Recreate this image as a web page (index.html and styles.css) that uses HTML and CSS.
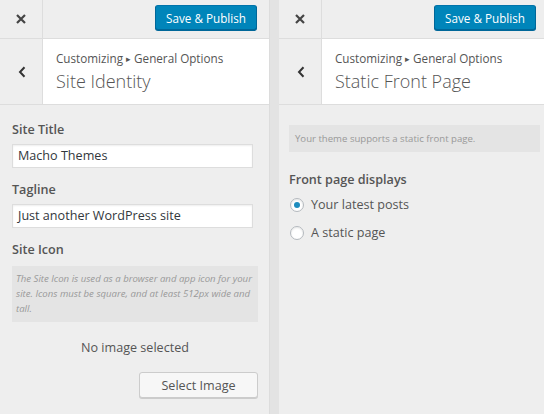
FILE: index.html
```html
<!DOCTYPE html>
<html>
<head>
<meta charset="utf-8">
<link rel="stylesheet" href="styles.css">
</head>
<body>
<div class="wrap">
  <div class="panel left">
    <div class="header">
      <div class="close"><svg width="10" height="10" viewBox="0 0 10 10"><path d="M1 1L9 9M9 1L1 9" stroke="#444" stroke-width="2.2" fill="none"/></svg></div>
      <button class="primary">Save &amp; Publish</button>
    </div>
    <div class="section-title">
      <div class="back"><svg width="8" height="12" viewBox="0 0 8 12"><path d="M6.5 1.2L2 6l4.5 4.8" stroke="#333" stroke-width="2" fill="none"/></svg></div>
      <div class="titles">
        <div class="crumb">Customizing <span class="tri">▸</span> General Options</div>
        <h3 class="title">Site Identity</h3>
      </div>
    </div>
    <div class="content">
      <div class="control">
        <label class="label">Site Title</label>
        <div class="input">Macho Themes</div>
      </div>
      <div class="control">
        <label class="label">Tagline</label>
        <div class="input">Just another WordPress site</div>
      </div>
      <div class="control icon">
        <label class="label">Site Icon</label>
        <div class="desc italic">The Site Icon is used as a browser and app icon for your site. Icons must be square, and at least 512px wide and tall.</div>
        <div class="noimg">No image selected</div>
        <div class="actions"><button class="secondary">Select Image</button></div>
      </div>
    </div>
  </div>
  <div class="gutter"></div>
  <div class="panel right">
    <div class="header">
      <div class="close"><svg width="10" height="10" viewBox="0 0 10 10"><path d="M1 1L9 9M9 1L1 9" stroke="#444" stroke-width="2.2" fill="none"/></svg></div>
      <button class="primary">Save &amp; Publish</button>
    </div>
    <div class="section-title">
      <div class="back"><svg width="8" height="12" viewBox="0 0 8 12"><path d="M6.5 1.2L2 6l4.5 4.8" stroke="#333" stroke-width="2" fill="none"/></svg></div>
      <div class="titles">
        <div class="crumb">Customizing <span class="tri">▸</span> General Options</div>
        <h3 class="title">Static Front Page</h3>
      </div>
    </div>
    <div class="content rcontent">
      <div class="desc plain">Your theme supports a static front page.</div>
      <div class="label fp">Front page displays</div>
      <div class="radio-row first"><span class="radio checked"></span><span class="rlabel">Your latest posts</span></div>
      <div class="radio-row"><span class="radio"></span><span class="rlabel">A static page</span></div>
    </div>
  </div>
</div>
</body>
</html>
```
FILE: styles.css
```css
* { box-sizing: border-box; }
html, body { margin: 0; padding: 0; }
body {
  width: 544px;
  height: 414px;
  overflow: hidden;
  background: #eee;
  font-family: "Open Sans", "Noto Sans", sans-serif;
  color: #555;
}
.wrap {
  display: flex;
  width: 560px;
  height: 414px;
}
.panel {
  flex: none;
  width: 270px;
  height: 414px;
  background: #eee;
  border-right: 1px solid #dcdcdc;
  display: flex;
  flex-direction: column;
}
.gutter {
  flex: none;
  width: 9px;
  background: #e3e3e3;
}
.header {
  height: 39px;
  border-bottom: 1px solid #ddd;
  display: flex;
  align-items: flex-start;
}
.close {
  width: 43px;
  height: 38px;
  border-right: 1px solid #ddd;
  display: flex;
  align-items: center;
  justify-content: center;
}
.primary {
  margin: 5px 12px 0 auto;
  height: 25px;
  padding: 0 10px;
  background: #0085ba;
  border: 1px solid #0073aa;
  border-color: #0073aa #006799 #006799;
  border-radius: 3px;
  box-shadow: 0 1px 0 #006799;
  color: #fff;
  font-family: "Open Sans", "Noto Sans", sans-serif;
  font-size: 11.7px;
  line-height: 22px;
}
.section-title {
  height: 66px;
  border-bottom: 1px solid #ddd;
  display: flex;
}
.back {
  width: 43px;
  border-right: 1px solid #ddd;
  display: flex;
  align-items: center;
  justify-content: center;
  padding-left: 1px;
}
.titles {
  flex: 1;
  background: #fff;
  padding: 10px 0 0 13px;
}
.crumb {
  font-size: 11.7px;
  line-height: 18px;
  color: #555;
}
.tri { font-size: 9px; position: relative; top: -1px; }
.title {
  margin: 0;
  font-size: 18px;
  font-weight: 300;
  line-height: 24px;
  color: #555;
}
.content {
  padding: 15px 11px 0 12px;
}
.control { margin-bottom: 12px; }
.label {
  display: block;
  font-size: 12.6px;
  font-weight: 600;
  line-height: 19px;
  color: #555;
}
.input {
  margin-top: 5px;
  width: 98%;
  height: 24px;
  background: #fff;
  border: 1px solid #ddd;
  box-shadow: inset 0 1px 2px rgba(0,0,0,.07);
  font-size: 12.6px;
  line-height: 22px;
  padding: 0 5px;
  color: #32373c;
}
.desc {
  background: #e4e4e4;
  color: #999;
}
.italic {
  margin-top: 7px;
  height: 56px;
  font-style: italic;
  font-size: 9.6px;
  line-height: 15px;
  padding: 5px 4px 0 4px;
}
.noimg {
  text-align: center;
  font-size: 12.6px;
  line-height: 18px;
  margin-top: 17px;
}
.actions {
  display: flex;
  justify-content: flex-end;
  margin-top: 15px;
}
.secondary {
  height: 26px;
  width: 119px;
  background: #f7f7f7;
  border: 1px solid #ccc;
  border-radius: 3px;
  box-shadow: 0 1px 0 #ccc;
  color: #555;
  font-family: "Open Sans", "Noto Sans", sans-serif;
  font-size: 12.6px;
  line-height: 23px;
  padding: 0;
}
.rcontent {
  padding: 20px 8px 0 10px;
}
.plain {
  height: 27px;
  font-size: 9.6px;
  line-height: 15px;
  padding: 6px 6px;
}
.fp { margin-top: 18px; }
.radio-row {
  height: 28px;
  display: flex;
  align-items: center;
  padding-left: 1px;
}
.radio-row.first { margin-top: 2px; }
.radio {
  width: 14px;
  height: 14px;
  border: 1px solid #b4b9be;
  border-radius: 50%;
  background: #fff;
  box-shadow: inset 0 1px 2px rgba(0,0,0,.1);
  display: flex;
  align-items: center;
  justify-content: center;
  margin-right: 7px;
}
.radio.checked::before {
  content: "";
  width: 6px;
  height: 6px;
  border-radius: 50%;
  background: #1e8cbe;
}
.rlabel {
  font-size: 12.6px;
  line-height: 18px;
  color: #555;
}
```
